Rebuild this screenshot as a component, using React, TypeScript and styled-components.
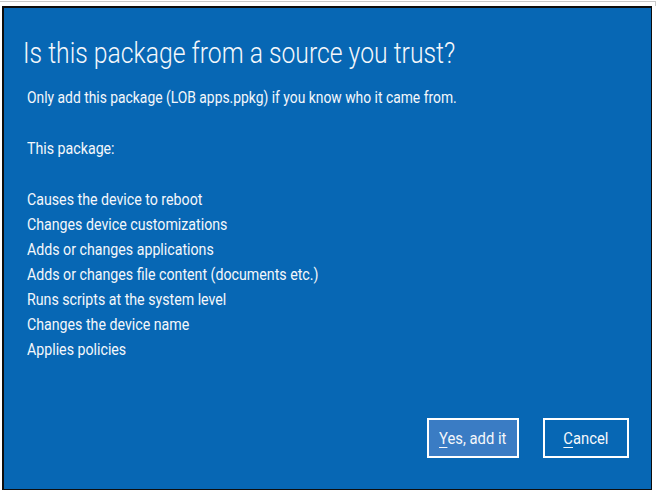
import React from 'react';
import styled, { createGlobalStyle } from 'styled-components';

const GlobalStyle = createGlobalStyle`
  html, body {
    margin: 0;
    padding: 0;
    background: #ffffff;
  }
  body {
    font-family: Roboto, "Noto Sans", sans-serif;
  }
`;

const Page = styled.div`
  width: 657px;
  height: 492px;
  padding-top: 1px;
  box-sizing: border-box;
`;

const TopRule = styled.div`
  width: 656px;
  height: 5px;
  box-sizing: border-box;
  border-top: 1px solid #c8c8c8;
  border-right: 1px solid #c8c8c8;
`;

const Dialog = styled.div`
  margin-left: 2px;
  width: 650px;
  height: 484px;
  box-sizing: border-box;
  border-style: solid;
  border-color: #0d0d0d;
  border-width: 2px 1px 1px 2px;
  background: #0767b4;
  color: #f4f7fb;
  display: flex;
  flex-direction: column;
  padding: 27px 22px 31px 19px;
`;

// the shot is horizontally squeezed, so text is narrowed to match
const Squeeze = styled.span<{ $x?: number }>`
  display: block;
  white-space: nowrap;
  transform: scaleX(${({ $x }) => $x ?? 0.835});
  transform-origin: left center;
`;

const Title = styled.h1`
  margin: 0;
  font-size: 29px;
  font-weight: 300;
  line-height: 36px;
`;

const Para = styled.p<{ $gap: number }>`
  margin: ${({ $gap }) => $gap}px 0 0 4px;
  font-size: 17px;
  font-weight: 400;
  line-height: 25px;
`;

const List = styled.ul`
  list-style: none;
  margin: 26px 0 0 4px;
  padding: 0;
  font-size: 17px;
  line-height: 25px;
`;

const Footer = styled.div`
  margin-top: auto;
  display: flex;
  justify-content: flex-end;
  gap: 24px;
`;

const Button = styled.button<{ $primary?: boolean; $width: number }>`
  width: ${({ $width }) => $width}px;
  height: 40px;
  box-sizing: border-box;
  border: 2px solid #ffffff;
  background: ${({ $primary }) => ($primary ? '#3a7cc4' : '#0767b4')};
  color: #f4f7fb;
  font-family: inherit;
  font-size: 17px;
  padding: 0;
  display: flex;
  align-items: center;
  justify-content: center;
  cursor: pointer;

  span {
    display: inline-block;
    white-space: nowrap;
    transform: scaleX(0.87);
  }

  u {
    text-decoration-thickness: 1px;
    text-underline-offset: 3px;
  }
`;

const items = [
  'Causes the device to reboot',
  'Changes device customizations',
  'Adds or changes applications',
  'Adds or changes file content (documents etc.)',
  'Runs scripts at the system level',
  'Changes the device name',
  'Applies policies',
];

const App = () => {
  return (
    <Page>
      <GlobalStyle />
      <TopRule />
      <Dialog>
        <Title>
          <Squeeze $x={0.853}>Is this package from a source you trust?</Squeeze>
        </Title>
        <Para $gap={14}>
          <Squeeze $x={0.815}>Only add this package (LOB apps.ppkg) if you know who it came from.</Squeeze>
        </Para>
        <Para $gap={26}>
          <Squeeze>This package:</Squeeze>
        </Para>
        <List>
          {items.map((item) => (
            <li key={item}>
              <Squeeze>{item}</Squeeze>
            </li>
          ))}
        </List>
        <Footer>
          <Button $primary $width={92}>
            <span>
              <u>Y</u>es, add it
            </span>
          </Button>
          <Button $width={86}>
            <span>
              <u>C</u>ancel
            </span>
          </Button>
        </Footer>
      </Dialog>
    </Page>
  );
};

export default App;
